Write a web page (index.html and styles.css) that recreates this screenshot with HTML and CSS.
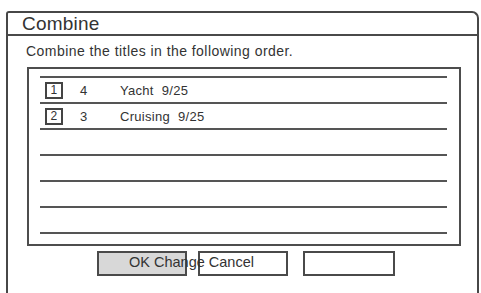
FILE: index.html
```html
<!DOCTYPE html>
<html>
<head>
<meta charset="utf-8">
<link rel="stylesheet" href="styles.css">
</head>
<body>
<div class="dialog">
  <div class="title">Combine</div>
  <div class="subtitle">Combine the titles in the following order.</div>
  <div class="listbox">
    <div class="row"><span class="idx">1</span><span class="num">4</span><span class="name">Yacht</span><span class="date">9/25</span></div>
    <div class="row"><span class="idx">2</span><span class="num">3</span><span class="name">Cruising</span><span class="date">9/25</span></div>
    <div class="row"></div>
    <div class="row"></div>
    <div class="row"></div>
    <div class="row last"></div>
  </div>
  <div class="buttons">
    <div class="btn sel"></div>
    <div class="btn b2"></div>
    <div class="btn b3"></div>
    <span class="btn-label">OK Change Cancel</span>
  </div>
</div>
</body>
</html>
```
FILE: styles.css
```css
html, body {
  margin: 0;
  padding: 0;
  background: #fff;
  overflow: hidden;
}
body {
  width: 481px;
  height: 293px;
  font-family: "Liberation Sans", Arial, sans-serif;
  color: #333;
}
.dialog {
  margin: 11px 2px 0 6px;
  height: 282px;
  border: 2px solid #474747;
  border-bottom: none;
  border-radius: 3px 7px 0 0;
  box-sizing: border-box;
}
.title {
  height: 21px;
  border-bottom: 2px solid #4a4a4a;
  padding-left: 14px;
  font-size: 19px;
  line-height: 21px;
  letter-spacing: 0.2px;
}
.subtitle {
  padding: 6px 0 0 18px;
  height: 22px;
  font-size: 14px;
  letter-spacing: 0.45px;
  line-height: 18px;
}
.listbox {
  margin: 3px 16px 0 19px;
  border: 2px solid #4d4d4d;
  padding: 7px 12px 10px 11px;
}
.row {
  height: 24px;
  border-top: 2px solid #555;
  display: flex;
  align-items: center;
  font-size: 13px;
  letter-spacing: 0.3px;
}
.row.last {
  border-bottom: 2px solid #555;
}
.idx {
  box-sizing: border-box;
  width: 18px;
  height: 17px;
  margin-left: 5px;
  border: 2px solid #444;
  font-size: 12px;
  line-height: 13px;
  text-align: center;
}
.num {
  margin-left: 17px;
  width: 40px;
}
.name {
  margin-right: 8px;
}
.buttons {
  position: relative;
  display: flex;
  margin: 5px 0 0 89px;
  height: 25px;
}
.btn {
  box-sizing: border-box;
  height: 25px;
  border: 2px solid #4a4a4a;
  background: #fff;
}
.btn.sel {
  width: 90px;
  background: #d8d8d8;
}
.btn.b2 {
  width: 90px;
  margin-left: 11px;
}
.btn.b3 {
  width: 92px;
  margin-left: 15px;
}
.btn-label {
  position: absolute;
  left: 32px;
  top: 2px;
  font-size: 14.5px;
  line-height: 19px;
  white-space: nowrap;
  z-index: 1;
}
```
